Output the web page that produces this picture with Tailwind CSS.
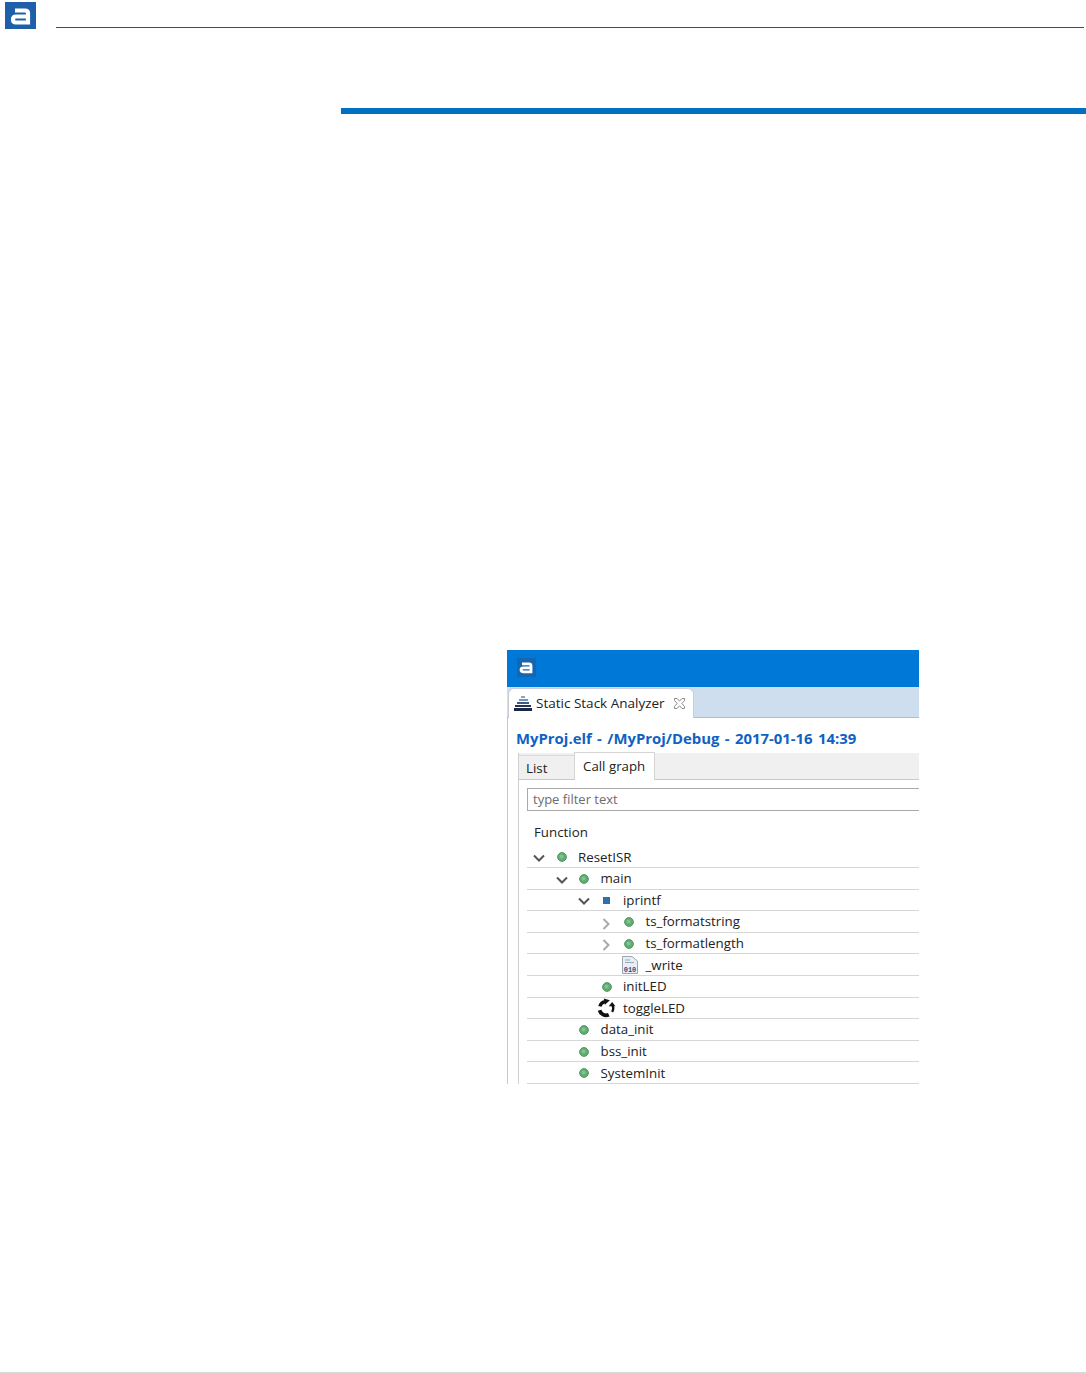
<!DOCTYPE html>
<html lang="en">
<head>
  <meta charset="UTF-8" />
  <title>Static Stack Analyzer</title>
  <script src="https://cdn.jsdelivr.net/npm/@tailwindcss/browser@4"></script>
</head>
<body class="bg-white">
  <svg width="0" height="0" class="absolute">
    <defs>
      <g id="dot"><circle cx="5" cy="5" r="4.4" fill="#62ab72" stroke="#4f9a63" stroke-width="1"/><circle cx="4.5" cy="4.5" r="2" fill="#86c291"/></g>
      <path id="down" d="M1 1.5 L6 6.5 L11 1.5" fill="none" stroke="#555" stroke-width="2"/>
      <path id="right" d="M2.5 1 L7.5 6 L2.5 11" fill="none" stroke="#aaa" stroke-width="2"/>
    </defs>
  </svg>

  <div class="w-[1086px] h-[1373px] flex flex-col overflow-hidden font-['Open_Sans',sans-serif]">
    <!-- page header -->
    <header class="h-[27px] mt-px flex items-end pl-[5px] pr-[2px] shrink-0">
      <svg width="31" height="27" viewBox="0 0 31 27" class="shrink-0 -mb-px">
        <rect width="31" height="27" fill="#1f5fa9"/>
        <path d="M10 8.5 H20 Q23 8.5 23 11 V20.5 H11 Q8 20.5 8 17.5 Q8 14.5 11 14.5 H22" fill="none" stroke="#fff" stroke-width="4.2"/>
      </svg>
      <div class="ml-[20px] flex-1 border-b border-[#4a4a4a] h-px"></div>
    </header>

    <div class="ml-[341px] mt-[80px] h-[6px] bg-[#0070c0] shrink-0"></div>

    <!-- figure -->
    <main class="ml-[507px] mt-[536px] w-[412px] h-[434px] overflow-hidden shrink-0 text-[13.3px] leading-none text-[#222]">
      <div class="h-[37px] bg-[#0078d7] flex items-center pl-[10px] pb-[2px]">
        <svg width="19" height="19" viewBox="0 0 19 19">
          <rect width="19" height="19" fill="#1565b0"/>
          <path d="M5 5.8 H12 Q14 5.8 14 7.8 V13.8 H6.5 Q4 13.8 4 11.8 Q4 9.8 6.5 9.8 H13.5" fill="none" stroke="#fff" stroke-width="2.8"/>
        </svg>
      </div>

      <div class="h-[31px] bg-[#cfdeee] border-b border-[#b4bcc6] flex items-end pl-px">
        <div class="h-[30px] w-[186px] bg-white border border-b-0 border-[#c9ced4] rounded-t-[6px] flex items-center pl-[5px] -mb-px">
          <svg width="18" height="16" viewBox="0 0 18 16" class="shrink-0">
            <rect x="7" y="0" width="4" height="2" fill="#8fa3bd"/>
            <rect x="5" y="3" width="9" height="2" fill="#7d93b2"/>
            <rect x="3" y="6" width="12" height="2" fill="#3c5a86"/>
            <rect x="1" y="9" width="16" height="2" fill="#22345c"/>
            <rect x="0" y="12" width="18" height="3" fill="#1a2748"/>
          </svg>
          <span class="ml-[4px] whitespace-nowrap text-[13.5px]">Static Stack Analyzer</span>
          <svg width="13" height="13" viewBox="0 0 13 13" class="ml-[8px] shrink-0">
            <path d="M1.5 1.5 L4 1.5 L6.5 4.2 L9 1.5 L11.5 1.5 L11.5 3.5 L8.8 6.5 L11.5 9.5 L11.5 11.5 L9 11.5 L6.5 8.8 L4 11.5 L1.5 11.5 L1.5 9.5 L4.2 6.5 L1.5 3.5 Z" fill="#fff" stroke="#8a8a8a" stroke-width="1"/>
          </svg>
        </div>
      </div>

      <div class="border-l border-[#c8c8c8]">
        <div class="h-[35px] flex items-center pl-[8px] pt-[5px] text-[14.9px] font-bold text-[#0f62c4] whitespace-nowrap [word-spacing:1.5px]">MyProj.elf - /MyProj/Debug - 2017-01-16 14:39</div>

        <div class="ml-[10px] border-l border-[#cfcfcf]">
          <!-- inner tabs -->
          <div class="h-[27px] bg-[#f0f0f0] border-b border-[#c9c9c9] flex items-end">
            <div class="w-[55px] h-[24px] flex items-center pl-[7px] pt-[2px] border-t border-[#d9d9d9]">List</div>
            <div class="w-[81px] h-[28px] -mb-px bg-white border-x border-t border-[#d4d4d4] flex items-center pl-[8px]">Call graph</div>
          </div>

          <div class="pl-[8px]">
            <div class="mt-[8px] h-[23px] border border-[#a9a9a9] border-r-0 flex items-center pl-[5px] text-[13px] text-[#6d6d6d]">type filter text</div>
            <div class="h-[35.5px] pt-[8px] flex items-center pl-[7px]">Function</div>

            <div class="h-[21.6px] border-b border-[#d6d6d6] flex items-center pl-[6px] pt-px">
              <svg width="12" height="8" class="shrink-0 mt-[2px]"><use href="#down"/></svg>
              <span class="w-[33px] flex justify-center"><svg width="10" height="10" viewBox="0 0 10 10"><use href="#dot"/></svg></span>ResetISR
            </div>
            <div class="h-[21.6px] border-b border-[#d6d6d6] flex items-center pl-[28.5px] pt-px">
              <svg width="12" height="8" class="shrink-0 mt-[2px]"><use href="#down"/></svg>
              <span class="w-[33px] flex justify-center"><svg width="10" height="10" viewBox="0 0 10 10"><use href="#dot"/></svg></span>main
            </div>
            <div class="h-[21.6px] border-b border-[#d6d6d6] flex items-center pl-[51px] pt-px">
              <svg width="12" height="8" class="shrink-0 mt-[2px]"><use href="#down"/></svg>
              <span class="w-[33px] flex justify-center"><span class="w-[7px] h-[7px] bg-[#2f6fae]"></span></span>iprintf
            </div>
            <div class="h-[21.6px] border-b border-[#d6d6d6] flex items-center pl-[73.5px] pt-px">
              <svg width="12" height="12" class="shrink-0 mt-[3px]"><use href="#right"/></svg>
              <span class="w-[33px] flex justify-center"><svg width="10" height="10" viewBox="0 0 10 10"><use href="#dot"/></svg></span>ts_formatstring
            </div>
            <div class="h-[21.6px] border-b border-[#d6d6d6] flex items-center pl-[73.5px] pt-px">
              <svg width="12" height="12" class="shrink-0 mt-[3px]"><use href="#right"/></svg>
              <span class="w-[33px] flex justify-center"><svg width="10" height="10" viewBox="0 0 10 10"><use href="#dot"/></svg></span>ts_formatlength
            </div>
            <div class="h-[21.6px] border-b border-[#d6d6d6] flex items-center pl-[85.5px] pt-px">
              <span class="w-[33px] flex justify-center pl-[2px]">
                <svg width="16" height="18" viewBox="0 0 16 18">
                  <path d="M.5.5 H10 L15.5 5 V17.5 H.5 Z" fill="#e8eef5" stroke="#9aa7b5"/>
                  <path d="M3 4 H8 M3 6.5 H12" stroke="#9aa7b5"/>
                  <text x="8" y="16" text-anchor="middle" font-family="Liberation Mono, monospace" font-weight="700" font-size="7" fill="#2c4f86">010</text>
                </svg>
              </span>_write
            </div>
            <div class="h-[21.6px] border-b border-[#d6d6d6] flex items-center pl-[63px] pt-px">
              <span class="w-[33px] flex justify-center"><svg width="10" height="10" viewBox="0 0 10 10"><use href="#dot"/></svg></span>initLED
            </div>
            <div class="h-[21.6px] border-b border-[#d6d6d6] flex items-center pl-[63px] pt-px">
              <span class="w-[33px] flex justify-center pr-[2px]">
                <svg width="20" height="20" viewBox="0 0 18 18">
                  <path d="M3.5 7.5 A6 6 0 0 1 8 3.2" fill="none" stroke="#111" stroke-width="3"/>
                  <path d="M7 .5 L12.5 2 L8 6 Z" fill="#111"/>
                  <path d="M14.5 6 A6 6 0 0 1 14.5 12.5" fill="none" stroke="#111" stroke-width="2.2"/>
                  <path d="M11.5 7.5 L14.5 3.5 L17.5 7.5 Z" fill="#111"/>
                  <path d="M11.5 15 A6 6 0 0 1 3.2 11" fill="none" stroke="#111" stroke-width="3.4"/>
                </svg>
              </span>toggleLED
            </div>
            <div class="h-[21.6px] border-b border-[#d6d6d6] flex items-center pl-[40.5px] pt-px">
              <span class="w-[33px] flex justify-center"><svg width="10" height="10" viewBox="0 0 10 10"><use href="#dot"/></svg></span>data_init
            </div>
            <div class="h-[21.6px] border-b border-[#d6d6d6] flex items-center pl-[40.5px] pt-px">
              <span class="w-[33px] flex justify-center"><svg width="10" height="10" viewBox="0 0 10 10"><use href="#dot"/></svg></span>bss_init
            </div>
            <div class="h-[21.6px] border-b border-[#d6d6d6] flex items-center pl-[40.5px] pt-px">
              <span class="w-[33px] flex justify-center"><svg width="10" height="10" viewBox="0 0 10 10"><use href="#dot"/></svg></span>SystemInit
            </div>
          </div>
        </div>
      </div>
    </main>

    <div class="mt-auto border-b border-[#d9d9d9] h-px"></div>
  </div>
</body>
</html>
